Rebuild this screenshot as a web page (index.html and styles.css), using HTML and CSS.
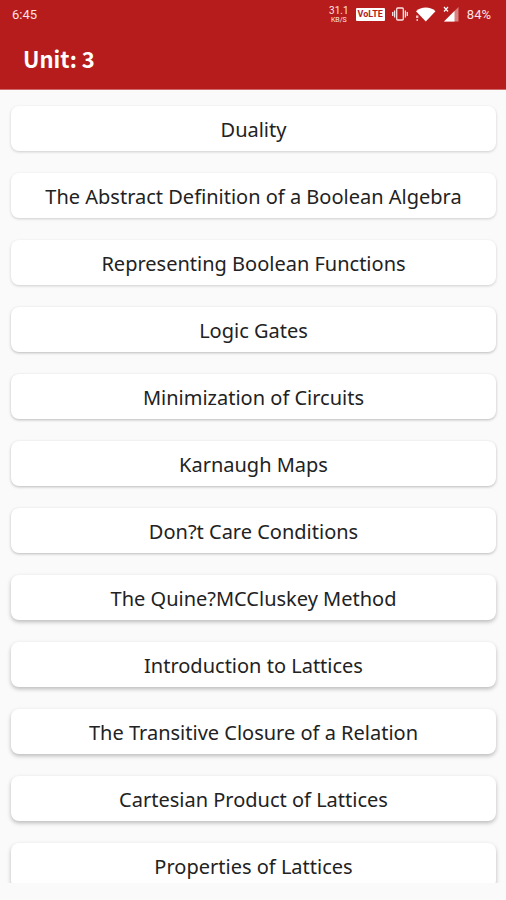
FILE: index.html
```html
<!DOCTYPE html>
<html lang="en">
<head>
    <meta charset="UTF-8">
    <meta name="viewport" content="width=device-width, initial-scale=1.0">
    <title>Unit: 3</title>
    <link rel="stylesheet" href="styles.css">
</head>
<body>
    <header class="app-header">
        <div class="status-bar">
            <span>6:45</span>
            <div class="status-icons">
                <div class="net-speed"><span>31.1</span><span class="unit">KB/S</span></div>
                <span class="volte">VoLTE</span>
                <!-- Vibrate -->
                <svg width="16" height="14" viewBox="0 0 16 14" fill="none" stroke="#fbe3e3" stroke-width="1.3">
                    <rect x="4.7" y="1" width="6.6" height="12" rx="1"/>
                    <path d="M2.6 3.5v7M13.4 3.5v7M.7 5v4M15.3 5v4"/>
                </svg>
                <!-- Wifi -->
                <svg width="21" height="16" viewBox="0 0 21 16" fill="#fff">
                    <path d="M1 5.2C6 .2 15.5 .2 20.5 5.2L10.8 15.5z"/>
                    <path d="M1 9.5h2.4v2.5H1zM1.5 13h1.5v2H1.5z" fill="#f3baba"/>
                </svg>
                <!-- Signal -->
                <svg width="16" height="16" viewBox="0 0 16 16">
                    <path d="M15.5 1v14.5H1z" fill="#d98080"/>
                    <path d="M11.5 5v10.5H1z" fill="#fff"/>
                    <path d="M1 1l4 4.5M5 1L1 5.5" stroke="#fff" stroke-width="1.2"/>
                </svg>
                <span class="battery">84%</span>
            </div>
        </div>
        <h1>Unit: 3</h1>
    </header>

    <main class="topic-list">
        <button class="topic">Duality</button>
        <button class="topic">The Abstract Definition of a Boolean Algebra</button>
        <button class="topic">Representing Boolean Functions</button>
        <button class="topic">Logic Gates</button>
        <button class="topic">Minimization of Circuits</button>
        <button class="topic">Karnaugh Maps</button>
        <button class="topic">Don?t Care Conditions</button>
        <button class="topic">The Quine?MCCluskey Method</button>
        <button class="topic">Introduction to Lattices</button>
        <button class="topic">The Transitive Closure of a Relation</button>
        <button class="topic">Cartesian Product of Lattices</button>
        <button class="topic">Properties of Lattices</button>
    </main>
</body>
</html>
```

FILE: styles.css
```css
* {
    box-sizing: border-box;
}
body {
    font-family: "Noto Sans", "Open Sans", sans-serif;
    margin: 0;
    height: 100vh;
    display: flex;
    flex-direction: column;
    padding-bottom: 17px;
    background-color: #fafafa;
}
.app-header {
    flex: none;
    background-color: #b71c1c;
    color: #fff;
    border-bottom: 1px solid #cf6a6a;
}
.status-bar {
    display: flex;
    justify-content: space-between;
    align-items: center;
    height: 28px;
    padding: 0 15px 0 12px;
    font-family: Roboto, sans-serif;
    font-size: 13px;
    color: #fbe3e3;
}
.status-icons {
    display: flex;
    align-items: center;
    gap: 7px;
}
.net-speed {
    display: flex;
    flex-direction: column;
    align-items: center;
    font-size: 10px;
    line-height: 11px;
}
.net-speed .unit {
    font-size: 7px;
    line-height: 8px;
}
.volte {
    padding: 0 2px;
    border-radius: 1px;
    background-color: #fff;
    color: #b71c1c;
    font-size: 9px;
    font-weight: bold;
    line-height: 13px;
}
.battery {
    margin-left: 1px;
}
h1 {
    margin: 0;
    padding: 14px 23px;
    font-family: "Noto Sans CJK JP", "Noto Sans", sans-serif;
    font-size: 22px;
    line-height: 33px;
}
.topic-list {
    flex: 1;
    min-height: 0;
    overflow: hidden;
    display: flex;
    flex-direction: column;
    gap: 22px;
    padding: 16px 10px 0 11px;
}
.topic {
    flex: none;
    height: 45px;
    padding: 2px 0 0;
    border: none;
    border-radius: 8px;
    background-color: #fff;
    box-shadow: 0 1px 3px rgba(0, 0, 0, 0.18);
    color: #222;
    font-family: inherit;
    font-size: 20px;
    cursor: pointer;
}
/* Shadows get deeper towards the bottom of the list */
.topic:nth-child(n+4) {
    box-shadow: 0 1px 3px rgba(0, 0, 0, 0.26);
}
.topic:nth-child(n+8) {
    box-shadow: 0 2px 4px rgba(0, 0, 0, 0.26);
}
```
